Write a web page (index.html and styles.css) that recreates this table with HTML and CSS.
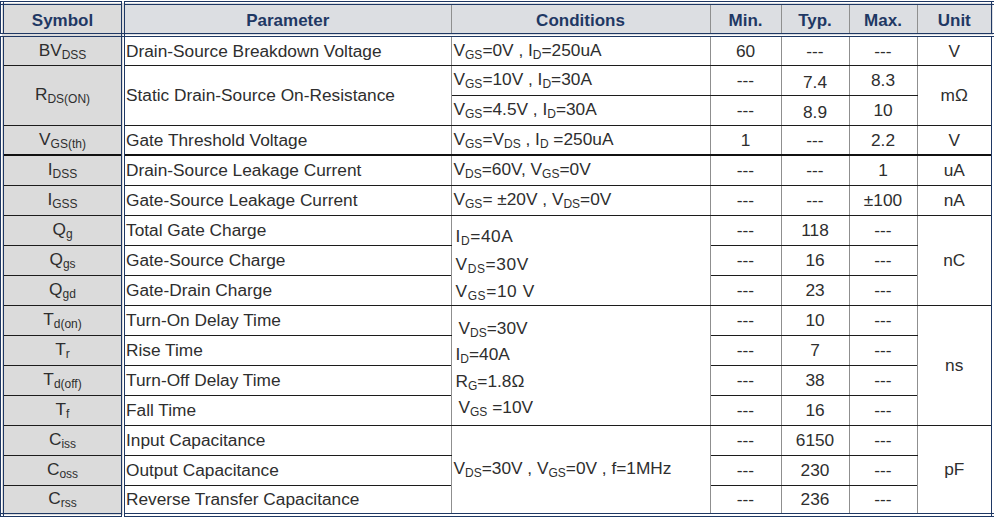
FILE: index.html
```html
<!DOCTYPE html>
<html>
<head>
<meta charset="utf-8">
<link rel="stylesheet" href="styles.css">
</head>
<body>
<table class="spec">
  <colgroup>
    <col class="c-sym"><col class="c-par"><col class="c-cond"><col class="c-min"><col class="c-typ"><col class="c-max"><col class="c-unit">
  </colgroup>
  <thead>
    <tr><th class="sym">Symbol</th><th>Parameter</th><th>Conditions</th><th>Min.</th><th>Typ.</th><th>Max.</th><th>Unit</th></tr>
  </thead>
  <tbody>
    <tr>
      <td class="sym">BV<sub>DSS</sub></td><td class="par">Drain-Source Breakdown Voltage</td>
      <td class="cond">V<sub>GS</sub>=0V , I<sub>D</sub>=250uA</td><td>60</td><td>---</td><td>---</td><td>V</td>
    </tr>
    <tr>
      <td class="sym" rowspan="2">R<sub>DS(ON)</sub></td><td class="par" rowspan="2">Static Drain-Source On-Resistance</td>
      <td class="cond">V<sub>GS</sub>=10V , I<sub>D</sub>=30A</td><td>---</td><td class="low">7.4</td><td>8.3</td><td rowspan="2">mΩ</td>
    </tr>
    <tr>
      <td class="cond">V<sub>GS</sub>=4.5V , I<sub>D</sub>=30A</td><td>---</td><td class="low">8.9</td><td>10</td>
    </tr>
    <tr class="thick">
      <td class="sym">V<sub>GS(th)</sub></td><td class="par">Gate Threshold Voltage</td>
      <td class="cond">V<sub>GS</sub>=V<sub>DS</sub> , I<sub>D</sub> =250uA</td><td>1</td><td>---</td><td>2.2</td><td>V</td>
    </tr>
    <tr>
      <td class="sym">I<sub>DSS</sub></td><td class="par">Drain-Source Leakage Current</td>
      <td class="cond">V<sub>DS</sub>=60V, V<sub>GS</sub>=0V</td><td>---</td><td>---</td><td>1</td><td>uA</td>
    </tr>
    <tr>
      <td class="sym">I<sub>GSS</sub></td><td class="par">Gate-Source Leakage Current</td>
      <td class="cond">V<sub>GS</sub>= ±20V , V<sub>DS</sub>=0V</td><td>---</td><td>---</td><td>±100</td><td>nA</td>
    </tr>
    <tr>
      <td class="sym">Q<sub>g</sub></td><td class="par">Total Gate Charge</td>
      <td class="cond group" rowspan="3">
        <div class="lines gc">
          <span>I<sub>D</sub>=40A</span>
          <span>V<sub>DS</sub>=30V</span>
          <span>V<sub>GS</sub>=10 V</span>
        </div>
      </td>
      <td>---</td><td>118</td><td>---</td><td rowspan="3">nC</td>
    </tr>
    <tr>
      <td class="sym">Q<sub>gs</sub></td><td class="par">Gate-Source Charge</td>
      <td>---</td><td>16</td><td>---</td>
    </tr>
    <tr>
      <td class="sym">Q<sub>gd</sub></td><td class="par">Gate-Drain Charge</td>
      <td>---</td><td>23</td><td>---</td>
    </tr>
    <tr>
      <td class="sym">T<sub>d(on)</sub></td><td class="par">Turn-On Delay Time</td>
      <td class="cond group" rowspan="4">
        <div class="lines sw">
          <span class="ind">V<sub>DS</sub>=30V</span>
          <span>I<sub>D</sub>=40A</span>
          <span>R<sub>G</sub>=1.8Ω</span>
          <span class="ind">V<sub>GS</sub> =10V</span>
        </div>
      </td>
      <td>---</td><td>10</td><td>---</td><td rowspan="4">ns</td>
    </tr>
    <tr>
      <td class="sym">T<sub>r</sub></td><td class="par">Rise Time</td>
      <td>---</td><td>7</td><td>---</td>
    </tr>
    <tr>
      <td class="sym">T<sub>d(off)</sub></td><td class="par">Turn-Off Delay Time</td>
      <td>---</td><td>38</td><td>---</td>
    </tr>
    <tr>
      <td class="sym">T<sub>f</sub></td><td class="par">Fall Time</td>
      <td>---</td><td>16</td><td>---</td>
    </tr>
    <tr>
      <td class="sym">C<sub>iss</sub></td><td class="par">Input Capacitance</td>
      <td class="cond" rowspan="3">V<sub>DS</sub>=30V , V<sub>GS</sub>=0V , f=1MHz</td>
      <td>---</td><td>6150</td><td>---</td><td rowspan="3">pF</td>
    </tr>
    <tr>
      <td class="sym">C<sub>oss</sub></td><td class="par">Output Capacitance</td>
      <td>---</td><td>230</td><td>---</td>
    </tr>
    <tr>
      <td class="sym">C<sub>rss</sub></td><td class="par">Reverse Transfer Capacitance</td>
      <td>---</td><td>236</td><td>---</td>
    </tr>
  </tbody>
</table>
</body>
</html>
```

FILE: styles.css
```css
html, body {
  margin: 0;
  padding: 0;
  background: #ffffff;
}

body {
  padding: 1px 0 0 0;
  font-family: "Liberation Sans", Arial, sans-serif;
}

.spec {
  border-collapse: collapse;
  table-layout: fixed;
  width: 991px;
  border: 4px double #1f3864;
  color: #2e2e2e;
  font-size: 17.3px;
}

.c-sym { width: 121px; }
.c-par { width: 328px; }
.c-cond { width: 259px; }
.c-min { width: 71px; }
.c-typ { width: 68px; }
.c-max { width: 68px; }
.c-unit { width: 76px; }

.spec th,
.spec td {
  padding: 0;
  text-align: center;
  vertical-align: middle;
  border-left: 1px solid #8f8f8f;
  border-right: 1px solid #8f8f8f;
  border-top: 1px solid #1c1c1c;
  border-bottom: 1px solid #1c1c1c;
  white-space: nowrap;
  line-height: 18px;
}

.spec thead tr {
  height: 32px;
}

.spec thead th {
  background: #dcdee2;
  color: #1f3864;
  font-weight: bold;
  font-size: 17px;
  padding-top: 3px;
  border-bottom: 4px double #1f3864;
  border-top: none;
}

.spec tbody tr {
  height: 30px;
}

.spec .sym {
  background: #dbdbdb;
  border-right: 4px double #1f3864;
}

.spec td.par {
  text-align: left;
  padding-left: 1px;
}

.spec td.cond {
  text-align: left;
  padding-left: 2px;
}

.spec tr.thick td {
  border-bottom: 2px solid #111111;
}

sub {
  font-size: 12px;
  line-height: 1;
  vertical-align: -3px;
}

.spec td.low {
  padding-top: 4px;
}

.lines {
  display: flex;
  flex-direction: column;
  align-items: flex-start;
  padding-left: 2px;
}

.lines.gc {
  gap: 7.5px;
  letter-spacing: 0.6px;
  padding-top: 9px;
}

.lines.sw {
  gap: 6.3px;
  padding-top: 7px;
}

.lines .ind {
  padding-left: 3px;
}
```
